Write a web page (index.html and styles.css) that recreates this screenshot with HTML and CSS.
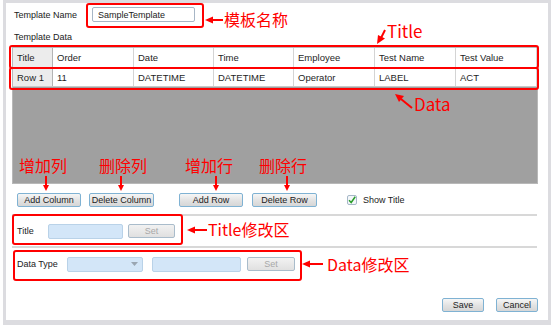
FILE: index.html
```html
<!DOCTYPE html>
<html lang="zh">
<head>
    <meta charset="UTF-8">
    <meta name="viewport" content="width=device-width, initial-scale=1.0">
    <title>Template Editor</title>
    <link rel="stylesheet" href="styles.css">
</head>
<body>
<div class="window">
    <div class="nameRow">
        <label class="label nameLabel" for="templateName">Template Name</label>
        <input type="text" id="templateName" class="nameInput" value="SampleTemplate">
    </div>
    <p class="label dataLabel">Template Data</p>
    <div class="grid">
        <div class="gridRow headRow">
            <div class="cell rowHead">Title</div>
            <div class="cell">Order</div>
            <div class="cell">Date</div>
            <div class="cell">Time</div>
            <div class="cell">Employee</div>
            <div class="cell">Test Name</div>
            <div class="cell">Test Value</div>
        </div>
        <div class="gridRow dataRow">
            <div class="cell rowHead">Row 1</div>
            <div class="cell">11</div>
            <div class="cell">DATETIME</div>
            <div class="cell">DATETIME</div>
            <div class="cell">Operator</div>
            <div class="cell">LABEL</div>
            <div class="cell">ACT</div>
        </div>
        <div class="gridEmpty"></div>
    </div>
    <div class="buttonRow">
        <button class="btn w64">Add Column</button>
        <button class="btn w65 gap8">Delete Column</button>
        <button class="btn w64 gap25">Add Row</button>
        <button class="btn w65 gap9">Delete Row</button>
        <span class="check">
            <svg width="8" height="8" viewBox="0 0 8 8"><path d="M1 4.2 L3.2 6.5 L7.2 0.8" fill="none" stroke="#2a9d2a" stroke-width="1.5"/></svg>
        </span>
        <span class="label">Show Title</span>
    </div>
    <div class="separator"></div>
    <div class="editRow">
        <span class="label titleLabel">Title</span>
        <span class="field w75"></span>
        <button class="btn disabled w47 gap5">Set</button>
    </div>
    <div class="separator"></div>
    <div class="editRow">
        <span class="label typeLabel">Data Type</span>
        <span class="field combo w76">
            <svg width="7" height="4" viewBox="0 0 7 4"><path d="M0 0 L7 0 L3.5 4 Z" fill="#9aa6b2"/></svg>
        </span>
        <span class="field w89 gap9"></span>
        <button class="btn disabled w48 gap6">Set</button>
    </div>
    <div class="footer">
        <button class="btn w42">Save</button>
        <button class="btn w42 gap12">Cancel</button>
    </div>
</div>

<div class="notes">
    <svg class="marks" width="554" height="329" viewBox="0 0 554 329">
        <g fill="none" stroke="#ff0000" stroke-width="2">
            <rect x="87" y="4" width="116" height="23" rx="2"/>
            <rect x="10" y="46" width="528" height="22" rx="2"/>
            <rect x="10" y="68" width="528" height="21" rx="2"/>
            <rect x="13" y="215" width="169" height="29" rx="2"/>
            <rect x="14" y="251" width="287" height="29" rx="2"/>
        </g>
        <g fill="#ff0000" stroke="#ff0000" stroke-width="2">
            <line x1="212" y1="20" x2="223" y2="20"/>
            <path d="M205 20 L213 16.5 L213 23.5 Z" stroke="none"/>
            <line x1="194" y1="230" x2="207" y2="230"/>
            <path d="M187 230 L195 226.5 L195 233.5 Z" stroke="none"/>
            <line x1="309" y1="264" x2="323" y2="264"/>
            <path d="M302 264 L310 260.5 L310 267.5 Z" stroke="none"/>
            <line x1="385" y1="30" x2="381" y2="38"/>
            <path d="M377 44 L378 35 L385 38.5 Z" stroke="none"/>
            <line x1="401" y1="99" x2="412" y2="108"/>
            <path d="M395 94 L404 96 L399 102 Z" stroke="none"/>
            <line x1="46" y1="176" x2="46" y2="186"/>
            <path d="M46 191 L43 185 L49 185 Z" stroke="none"/>
            <line x1="121" y1="176" x2="121" y2="186"/>
            <path d="M121 191 L118 185 L124 185 Z" stroke="none"/>
            <line x1="216" y1="176" x2="216" y2="186"/>
            <path d="M216 191 L213 185 L219 185 Z" stroke="none"/>
            <line x1="287" y1="176" x2="287" y2="186"/>
            <path d="M287 191 L284 185 L290 185 Z" stroke="none"/>
        </g>
    </svg>
    <span class="note big nameNote">模板名称</span>
    <span class="note big titleNote">Title</span>
    <span class="note big dataNote">Data</span>
    <span class="note addCol">增加列</span>
    <span class="note delCol">删除列</span>
    <span class="note addRow">增加行</span>
    <span class="note delRow">删除行</span>
    <span class="note titleEdit">Title修改区</span>
    <span class="note dataEdit">Data修改区</span>
</div>
</body>
</html>
```

FILE: styles.css
```css
body{
    margin: 0;
    position: relative;
    width: 554px;
    height: 329px;
    background-color: white;
    font-family: "Liberation Sans", "DejaVu Sans", sans-serif;
    color: #1e1e1e;
}
.window{
    margin-left: 3px;
    width: 542px;
    height: 317px;
    border: 3px solid #dcdce0;
    border-bottom-width: 5px;
    background-color: white;
}
.label{
    font-size: 9px;
    color: #222;
}
.nameRow{
    display: flex;
    align-items: center;
    padding: 4px 0 0 8px;
    height: 15px;
}
.nameLabel{
    width: 78px;
}
.nameInput{
    box-sizing: border-box;
    width: 103px;
    height: 15px;
    margin: 0;
    padding: 0 5px;
    border: 1px solid #a7b6c6;
    border-radius: 2px;
    font-family: inherit;
    font-size: 9px;
    color: #222;
}
.dataLabel{
    margin: 10px 0 0 8px;
    line-height: 10px;
}
.grid{
    box-sizing: border-box;
    margin: 5px 0 0 6px;
    width: 526px;
    height: 137px;
    border: 1px solid #b8b8b8;
    display: flex;
    flex-direction: column;
}
.gridRow{
    display: grid;
    grid-template-columns: 40px 81px 80px 80px 81px 81px 81px;
    border-bottom: 1px solid #c8c8c8;
    background-color: white;
}
.headRow{
    height: 19px;
}
.dataRow{
    height: 18px;
}
.cell{
    display: flex;
    align-items: center;
    padding-left: 4px;
    border-right: 1px solid #d4d4d4;
    font-size: 9.5px;
    white-space: nowrap;
}
.rowHead{
    background-color: #ececec;
    border-right-color: #b4b4b4;
}
.gridEmpty{
    flex: 1;
    background-color: #a0a0a0;
}
.buttonRow{
    display: flex;
    align-items: center;
    margin: 9px 0 0 11px;
    height: 14px;
}
.btn{
    box-sizing: border-box;
    height: 14px;
    margin: 0;
    padding: 0;
    border: 1px solid #7fb2d3;
    border-radius: 2px;
    background: linear-gradient(#f6f6f6, #e2e2e2 55%, #d6d6d6);
    font-family: inherit;
    font-size: 9px;
    color: #222;
}
.btn.disabled{
    border-color: #a9bccb;
    background: linear-gradient(#f2f2f2, #e0e0e0);
    color: #a8a8a8;
}
.w42{ width: 42px; }
.w47{ width: 47px; }
.w48{ width: 48px; }
.w64{ width: 64px; }
.w65{ width: 65px; }
.w75{ width: 75px; }
.w76{ width: 76px; }
.w89{ width: 89px; }
.gap5{ margin-left: 5px; }
.gap6{ margin-left: 6px; }
.gap8{ margin-left: 8px; }
.gap9{ margin-left: 9px; }
.gap12{ margin-left: 12px; }
.gap25{ margin-left: 25px; }
.check{
    box-sizing: border-box;
    display: flex;
    align-items: center;
    justify-content: center;
    width: 10px;
    height: 10px;
    margin: 0 6px 0 30px;
    border: 1px solid #a6b8c8;
    border-radius: 2px;
    background-color: #f4f7fa;
}
.separator{
    margin-left: 6px;
    width: 525px;
    height: 2px;
    background-color: #d8d8d8;
}
.buttonRow + .separator{
    margin-top: 7px;
}
.editRow{
    display: flex;
    align-items: center;
    height: 30px;
    padding-left: 11px;
}
.editRow + .separator + .editRow{
    height: 32px;
}
.titleLabel{
    width: 31px;
}
.typeLabel{
    width: 50px;
}
.field{
    box-sizing: border-box;
    display: flex;
    align-items: center;
    justify-content: flex-end;
    height: 15px;
    border: 1px solid #b9d2e8;
    border-radius: 2px;
    background-color: #d3e6f8;
}
.combo{
    padding-right: 4px;
}
.footer{
    display: flex;
    justify-content: flex-end;
    margin-top: 18px;
    padding-right: 10px;
}
.notes{
    position: absolute;
    left: 0;
    top: 0;
    width: 554px;
    height: 329px;
}
.marks{
    position: absolute;
    left: 0;
    top: 0;
}
.note{
    position: absolute;
    font-family: "Noto Sans CJK SC", sans-serif;
    font-size: 16px;
    line-height: 18px;
    color: #ff0000;
    white-space: nowrap;
}
.nameNote{ left: 224px; top: 10px; }
.titleNote{ left: 387px; top: 22px; font-size: 17px; }
.dataNote{ left: 414px; top: 95px; font-size: 17px; }
.addCol{ left: 19px; top: 156px; }
.delCol{ left: 99px; top: 156px; }
.addRow{ left: 185px; top: 156px; }
.delRow{ left: 259px; top: 156px; }
.titleEdit{ left: 208px; top: 220px; }
.dataEdit{ left: 327px; top: 255px; }
```
